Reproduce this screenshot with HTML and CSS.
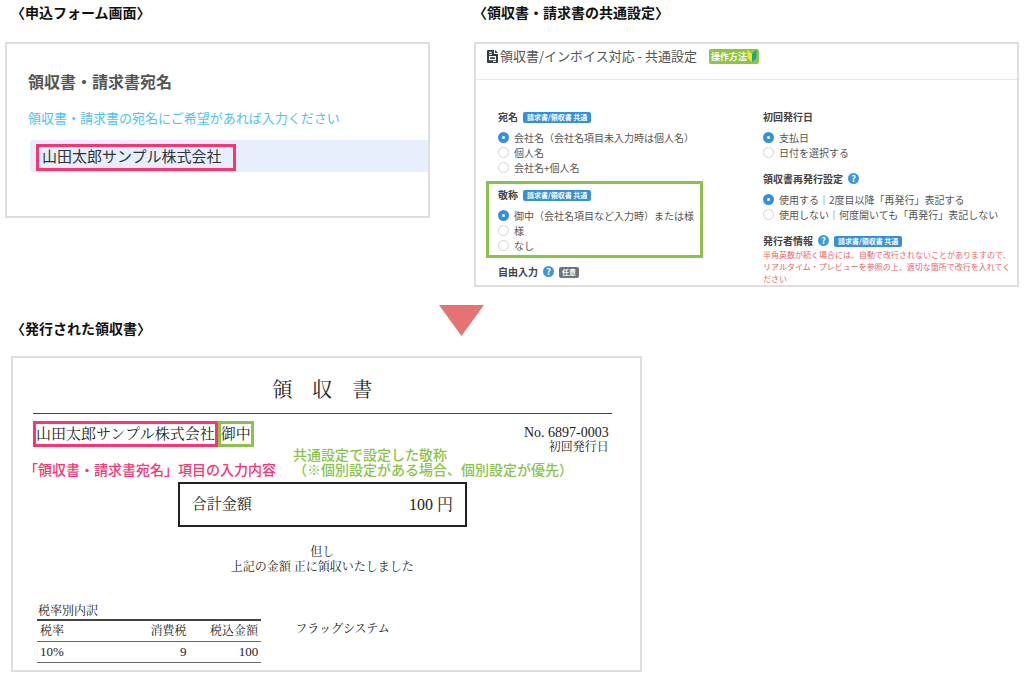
FILE: index.html
```html
<!DOCTYPE html>
<html lang="ja">
<head>
<meta charset="utf-8">
<title>領収書の宛名と敬称</title>
<link rel="stylesheet" href="styles.css">
</head>
<body>
<main class="page">
  <div class="top">
    <section class="form-side">
      <h2 class="heading">〈申込フォーム画面〉</h2>
      <div class="panel form-panel">
        <label class="form-title" for="addressee">領収書・請求書宛名</label>
        <p class="form-help">領収書・請求書の宛名にご希望があれば入力ください</p>
        <div class="field">
          <input class="field-input" id="addressee" type="text" value="山田太郎サンプル株式会社">
          <span class="field-mark"></span>
        </div>
      </div>
    </section>

    <section class="settings-side">
      <h2 class="heading">〈領収書・請求書の共通設定〉</h2>
      <div class="panel">
        <header class="settings-head">
          <svg class="doc-icon" viewBox="0 0 11 13" aria-hidden="true">
            <path fill="#343a40" fill-rule="evenodd" d="M1 0h6v4h4v8a1 1 0 0 1-1 1H1a1 1 0 0 1-1-1V1a1 1 0 0 1 1-1zM2 1.800v1h3v-1zM2 3.800v1h3v-1zM2 6v4.200h7V6zM3.200 7.200h4.600V9H3.200zM6 11v1h3v-1z"/>
            <path fill="#343a40" d="M8 0l3 3H8z"/>
          </svg>
          <h3 class="settings-title">領収書/インボイス対応 - 共通設定</h3>
          <a class="howto" href="#">操作方法<svg class="mark-icon" viewBox="0 0 10 12" aria-hidden="true"><path fill="#ffe02e" d="M.5.500Q1 0 1.500.500L5 4v8L1 8.500Q.5 8 .5 7z"/><path fill="#12a5a0" d="M9.500.500Q9 0 8.500.500L5 4v8l4-3.500Q9.500 8 9.500 7z"/></svg></a>
        </header>
        <div class="settings-body">
          <div class="column">
            <fieldset class="group">
              <legend class="group-label">宛名<span class="badge">請求書/領収書 共通</span></legend>
              <label class="option"><input type="radio" name="to" checked>会社名（会社名項目未入力時は個人名）</label>
              <label class="option"><input type="radio" name="to">個人名</label>
              <label class="option"><input type="radio" name="to">会社名+個人名</label>
            </fieldset>
            <fieldset class="group group-marked">
              <legend class="group-label">敬称<span class="badge">請求書/領収書 共通</span></legend>
              <label class="option"><input type="radio" name="honorific" checked>御中（会社名項目など入力時）または様</label>
              <label class="option"><input type="radio" name="honorific">様</label>
              <label class="option"><input type="radio" name="honorific">なし</label>
            </fieldset>
            <div class="group">
              <div class="group-label">自由入力<span class="help">?</span><span class="badge badge-gray">任意</span></div>
            </div>
          </div>
          <div class="column">
            <fieldset class="group">
              <legend class="group-label">初回発行日</legend>
              <label class="option"><input type="radio" name="date" checked>支払日</label>
              <label class="option"><input type="radio" name="date">日付を選択する</label>
            </fieldset>
            <fieldset class="group">
              <legend class="group-label">領収書再発行設定<span class="help">?</span></legend>
              <label class="option"><input type="radio" name="reissue" checked>使用する｜2度目以降「再発行」表記する</label>
              <label class="option"><input type="radio" name="reissue">使用しない｜何度開いても「再発行」表記しない</label>
            </fieldset>
            <div class="group group-last">
              <div class="group-label">発行者情報<span class="help">?</span><span class="badge">請求書/領収書 共通</span></div>
              <p class="warning">半角英数が続く場合には、自動で改行されないことがありますので、<br>リアルタイム・プレビューを参照の上、適切な箇所で改行を入れてく<br>ださい</p>
            </div>
          </div>
        </div>
      </div>
    </section>
  </div>

  <div class="divider">
    <h2 class="heading">〈発行された領収書〉</h2>
    <svg class="arrow" viewBox="0 0 45 31" aria-hidden="true"><path fill="#e57373" d="M0 0h45L22.500 31z"/></svg>
  </div>

  <section class="panel receipt">
    <h3 class="receipt-title">領　収　書</h3>
    <div class="receipt-row">
      <span class="mark mark-pink">山田太郎サンプル株式会社</span>
      <span class="mark mark-green">御中</span>
      <div class="receipt-number"><span class="number">No. 6897-0003</span><span>初回発行日</span></div>
    </div>
    <div class="notes">
      <p class="note-pink">「領収書・請求書宛名」項目の入力内容</p>
      <p class="note-green">共通設定で設定した敬称<br>（※個別設定がある場合、個別設定が優先）</p>
    </div>
    <div class="total"><span>合計金額</span><span class="amount">100 円</span></div>
    <p class="statement">但し<br>上記の金額 正に領収いたしました</p>
    <div class="breakdown">
      <table class="tax">
        <caption>税率別内訳</caption>
        <thead><tr><th>税率</th><th>消費税</th><th>税込金額</th></tr></thead>
        <tbody><tr><td>10%</td><td>9</td><td>100</td></tr></tbody>
      </table>
      <p class="issuer">フラッグシステム</p>
    </div>
  </section>
</main>
</body>
</html>
```

FILE: styles.css
```css
* { box-sizing: border-box; }

body {
  margin: 0;
  background: #fff;
  color: #222;
  font-family: "Noto Sans CJK JP", sans-serif;
}

h2, h3, p { margin: 0; }

.page { padding: 2px 5px 6px; }

.top {
  display: grid;
  grid-template-columns: 425fr 545fr;
  column-gap: 44px;
  align-items: start;
}

.heading {
  margin: 0 0 20px 6px;
  font-size: 14px;
  line-height: 20px;
  font-weight: 700;
  color: #111;
  white-space: nowrap;
}

.settings-side .heading { margin-left: -1px; }

.panel {
  border: 2px solid #dedede;
  background: #fff;
}

/* Application form */
.form-panel { padding: 25px 0 44px 21px; }

.form-title {
  display: block;
  font-size: 16px;
  line-height: 24px;
  font-weight: 700;
  color: #555;
}

.form-help {
  margin: 15px 0 12px;
  font-size: 13px;
  line-height: 20px;
  color: #4fc3f0;
  white-space: nowrap;
}

.field { position: relative; margin-left: 2px; }

.field-input {
  display: block;
  width: 100%;
  height: 32px;
  padding: 0 12px 2px;
  border: 0;
  border-radius: 3px 0 0 3px;
  background: #e8effc;
  color: #333;
  font: 15px "Noto Sans CJK JP", sans-serif;
}

.field-mark {
  position: absolute;
  left: 6px;
  top: 4px;
  width: 200px;
  height: 27px;
  border: 3px solid #ff3370;
  pointer-events: none;
}

/* Common settings */
.settings-head {
  display: flex;
  align-items: center;
  padding: 2px 11px 13px;
  border-bottom: 1px solid #e6e6e6;
}

.doc-icon { width: 11px; height: 13px; margin-right: 2px; }

.settings-title {
  font-size: 13px;
  line-height: 20px;
  font-weight: 400;
  color: #555;
}

.howto {
  display: flex;
  align-items: center;
  height: 15px;
  margin-left: 12px;
  padding: 0 2px;
  border-radius: 2px;
  background: #8cc63f;
  color: #fff;
  font-size: 9px;
  font-weight: 700;
  text-decoration: none;
}

.mark-icon { width: 10px; height: 12px; }

.settings-body {
  display: grid;
  grid-template-columns: 265fr 266fr;
  padding: 23px 0 0 10px;
}

.column { min-width: 0; }

.group {
  width: 217px;
  min-width: 0;
  margin: 0;
  padding: 4px 9px 2px;
  border: 3px solid transparent;
  white-space: nowrap;
}

.group-marked { margin-top: 1px; border-color: #8bc34a; }
.group-last { padding-bottom: 0; border-bottom: 0; }

.group-label {
  display: flex;
  float: left;
  align-items: center;
  gap: 5px;
  width: 100%;
  height: 14px;
  margin-bottom: 6px;
  padding: 0;
  font-size: 10px;
  line-height: 14px;
  font-weight: 700;
  color: #444;
}

.badge {
  padding: 0 4px;
  border-radius: 2px;
  background: #3490dc;
  color: #fff;
  font-size: 7px;
  line-height: 11px;
}

.badge-gray { padding: 0 3px; background: #6c757d; }

.help {
  width: 11px;
  height: 11px;
  margin-bottom: 2px;
  border-radius: 50%;
  background: #3d97d8;
  color: #fff;
  font-size: 9px;
  line-height: 11px;
  text-align: center;
}

.option {
  display: flex;
  clear: both;
  align-items: center;
  gap: 5px;
  height: 15px;
  font-size: 10px;
  line-height: 15px;
  color: #555;
}

.option input {
  appearance: none;
  flex: none;
  width: 11px;
  height: 11px;
  margin: 0;
  border: 1px solid #ced4da;
  border-radius: 50%;
  background: #fff;
}

.option input:checked { border: 4px solid #3490dc; }

.warning {
  clear: both;
  height: 35px;
  overflow-y: clip;
  font-size: 8px;
  line-height: 12px;
  color: #f06464;
}

.group-last { width: auto; padding-right: 0; }
.group-last .group-label { margin-bottom: 1px; }

/* Heading with arrow */
.divider {
  display: grid;
  grid-template-columns: 434fr 45px 535fr;
  align-items: end;
  margin: 18px 0 20px;
}

.divider .heading { margin: 0 0 0 6px; line-height: 16px; }
.arrow { display: block; width: 45px; height: 31px; align-self: start; }

/* Receipt */
.receipt {
  width: 62.2%;
  min-width: 620px;
  margin-left: 6px;
  padding: 18px 28px 7px 20px;
  font-family: "Liberation Serif", "Noto Serif CJK JP", "Noto Sans CJK JP", serif;
}

.receipt-title {
  padding-bottom: 9px;
  border-bottom: 1px solid #444;
  font-size: 20px;
  line-height: 28px;
  font-weight: 400;
  text-align: center;
}

.receipt-row {
  display: flex;
  align-items: flex-start;
  height: 26px;
  margin-top: 7px;
}

.mark {
  border: 3px solid #ff3370;
  font-size: 15px;
  line-height: 20px;
  white-space: nowrap;
}

.mark-green { border-color: #8bc34a; }

.receipt-number {
  display: flex;
  flex-direction: column;
  margin: 5px 3px 0 auto;
  font-size: 12px;
  line-height: 14px;
  text-align: right;
}

.number { font-size: 14px; }

.notes {
  display: flex;
  align-items: flex-end;
  gap: 17px;
  margin-left: -9px;
  font: 500 14px/15px "Noto Sans CJK JP", sans-serif;
  white-space: nowrap;
}

.note-pink { color: #ff3370; }
.note-green { color: #8bc34a; }

.total {
  display: flex;
  justify-content: space-between;
  width: 50%;
  margin: 5px auto 18px;
  padding: 0 12px;
  border: 2px solid #222;
  font-size: 15px;
  line-height: 41px;
}

.amount { font-size: 16px; }

.statement {
  font-size: 12px;
  line-height: 15px;
  text-align: center;
}

.breakdown {
  display: flex;
  align-items: flex-start;
  gap: 34px;
  margin: 29px 0 0 4px;
  font-size: 12px;
}

.tax {
  width: 39%;
  border-collapse: collapse;
  table-layout: fixed;
}

.tax caption { padding: 0 1px 1px; line-height: 14px; text-align: left; }
.tax tr { border-bottom: 1px solid #666; }
.tax thead { border-top: 2px solid #444; }
.tax th { width: 30%; padding: 0 3px; font-weight: 400; line-height: 20px; text-align: right; }
.tax th:first-child { width: 38%; }
.tax th:last-child { width: 32%; }
.tax td { padding: 0 3px; font-size: 13px; line-height: 20px; text-align: right; }
.tax th:first-child, .tax td:first-child { text-align: left; }

.issuer { padding-top: 17px; line-height: 16px; }
```
